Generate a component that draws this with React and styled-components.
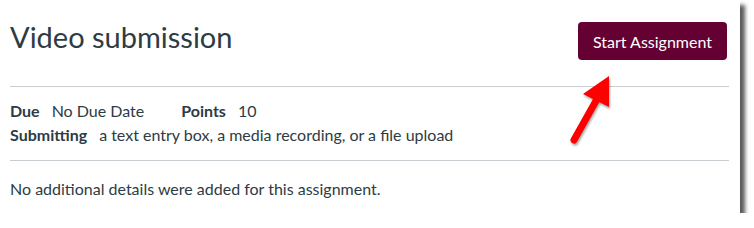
import React from "react";
import styled, { createGlobalStyle } from "styled-components";

const GlobalStyle = createGlobalStyle`
  body {
    margin: 0;
    background: #ffffff;
    font-family: Lato, "Liberation Sans", sans-serif;
    color: #2d3b45;
  }
`;

const Card = styled.div`
  position: relative;
  width: 740px;
  height: 213px;
  box-sizing: border-box;
  background: #ffffff;
  padding: 0 11px 0 10px;
  box-shadow: 5px 5px 4px rgba(0, 0, 0, 0.65);
`;

const Header = styled.header`
  display: flex;
  justify-content: space-between;
  align-items: flex-start;
  height: 64px;
  padding-top: 22px;
  border-bottom: 1px solid #c7cdd1;
`;

const Title = styled.h1`
  margin: 0;
  font-size: 29px;
  line-height: 29px;
  font-weight: 400;
  color: #2d3b45;
`;

const StartButton = styled.button`
  height: 38px;
  width: 149px;
  margin-right: 2px;
  border: none;
  border-radius: 4px;
  background: #650033;
  color: #ffffff;
  font-family: Lato, "Liberation Sans", sans-serif;
  font-size: 16px;
  cursor: pointer;
`;

const Details = styled.section`
  padding: 12px 0 13px;
  border-bottom: 1px solid #c7cdd1;
`;

const DetailRow = styled.div`
  display: flex;
  font-size: 16px;
  line-height: 24px;
`;

const Item = styled.span`
  margin-right: ${(p) => p.$gap || 0}px;
  white-space: nowrap;
`;

const Label = styled.strong`
  font-weight: 700;
  margin-right: 12px;
`;

const Description = styled.p`
  margin: 0;
  padding-top: 16px;
  font-size: 16px;
  line-height: 24px;
`;

const Arrow = styled.svg`
  position: absolute;
  left: 565px;
  top: 70px;
  filter: drop-shadow(1px 2px 1px rgba(0, 0, 0, 0.35));
`;

export default function App() {
  return (
    <>
      <GlobalStyle />
      <Card>
        <Header>
          <Title>Video submission</Title>
          <StartButton>Start Assignment</StartButton>
        </Header>
        <Details>
          <DetailRow>
            <Item $gap={37}>
              <Label>Due</Label>No Due Date
            </Item>
            <Item>
              <Label>Points</Label>10
            </Item>
          </DetailRow>
          <DetailRow>
            <Item>
              <Label>Submitting</Label>a text entry box, a media recording, or
              a file upload
            </Item>
          </DetailRow>
        </Details>
        <Description>No additional details were added for this assignment.</Description>
        <Arrow width="55" height="80" viewBox="0 0 55 80">
          <line
            x1="9"
            y1="70"
            x2="32"
            y2="29"
            stroke="#ff0000"
            strokeWidth="7"
            strokeLinecap="round"
          />
          <polygon points="44,6 18,24 44,37" fill="#ff0000" />
        </Arrow>
      </Card>
    </>
  );
}
